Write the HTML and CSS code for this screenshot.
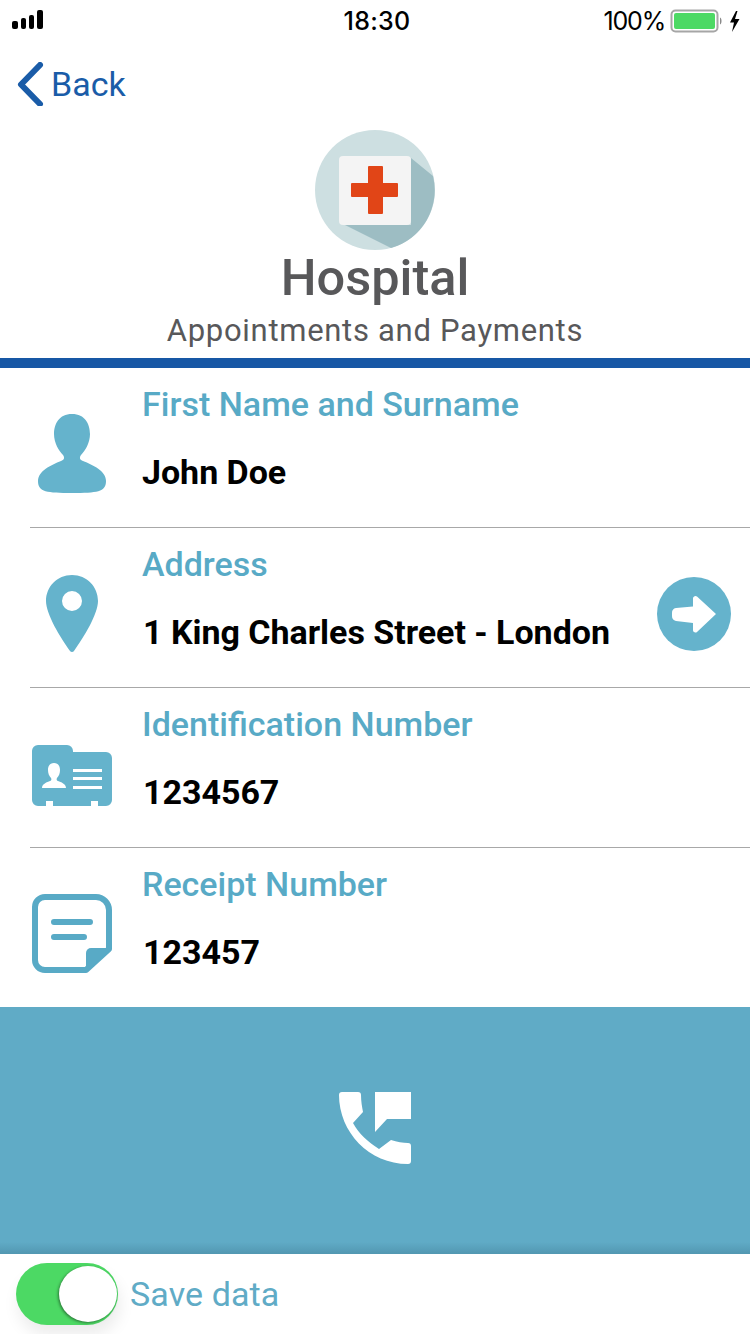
FILE: index.html
```html
<!DOCTYPE html>
<html lang="en">
<head>
<meta charset="utf-8">
<title>Hospital</title>
<link rel="stylesheet" href="styles.css">
</head>
<body>
<div class="page">
  <header class="status">
    <svg class="signal" width="34" height="20" viewBox="0 0 34 20"><g fill="#000"><rect x="0" y="11" width="6" height="8" rx="2"/><rect x="9" y="8" width="5" height="11" rx="2"/><rect x="17" y="5" width="5" height="14" rx="2"/><rect x="25" y="0" width="6" height="19" rx="2"/></g></svg>
    <span class="time">18:30</span>
    <div class="status-right">
      <span class="pct">100%</span>
      <svg width="72" height="24" viewBox="0 0 72 24"><rect x="1.500" y="1.500" width="46" height="21" rx="4" fill="#fff" stroke="#a6a6a6" stroke-width="2"/><rect x="4" y="4" width="41" height="16" rx="2" fill="#4cd964"/><path d="M50 8.500c2 .5 2 6.500 0 7z" fill="#8a8a8a"/><path d="M66 2l-6 11.500h4l-2 9.500 7.500-13h-4.500l2.500-8z" fill="#000"/></svg>
    </div>
  </header>
  <nav class="nav">
    <svg width="28" height="44" viewBox="0 0 28 44"><path d="M23 3 4 22.500 23 42" fill="none" stroke="#1a5ca8" stroke-width="6" stroke-linecap="round" stroke-linejoin="round"/></svg>
    <span class="back">Back</span>
  </nav>
  <section class="brand">
    <svg class="logo" width="120" height="120" viewBox="0 0 120 120">
      <circle cx="60" cy="60" r="60" fill="#cddfe1"/>
      <path d="M96 28 118 46A60 60 0 0 1 76 118L30 95H96z" fill="#9dbdc3"/>
      <rect x="24" y="26" width="72" height="69" rx="4" fill="#f4f4f4"/>
      <path d="M54 36h13a1 1 0 0 1 1 1V53h14a1 1 0 0 1 1 1v12a1 1 0 0 1-1 1H68v16a1 1 0 0 1-1 1H54a1 1 0 0 1-1-1V67H37a1 1 0 0 1-1-1V54a1 1 0 0 1 1-1H53V37a1 1 0 0 1 1-1z" fill="#e14517"/>
    </svg>
    <h1 class="title">Hospital</h1>
    <p class="subtitle">Appointments and Payments</p>
  </section>
  <main class="rows">
    <div class="row">
      <svg class="ico" width="143" height="159" viewBox="0 0 143 159"><path d="M72 46C59 46 54 56 54 66c0 9 5 17 9 21 2 3 1 5-2 6-10 4-23 10-23 20 0 11 9 12 34 12s34-1 34-12c0-10-13-16-23-20-3-1-4-3-2-6 4-4 9-12 9-21 0-10-5-20-18-20z" fill="#65b3cc"/></svg>
      <div class="text"><div class="label">First Name and Surname</div><div class="value value-tight">John Doe</div></div>
    </div>
    <div class="row">
      <svg class="ico" width="143" height="159" viewBox="0 0 143 159"><path fill-rule="evenodd" d="M72 47c15 0 26 12 26 26 0 13-14 36-24 50a2.500 2.500 0 0 1-4 0C60 109 46 86 46 73c0-14 11-26 26-26zm0 16a10 10 0 1 0 0 20 10 10 0 0 0 0-20z" fill="#65b3cc"/></svg>
      <div class="text"><div class="label">Address</div><div class="value">1 King Charles Street - London</div></div>
      <svg class="go" width="74" height="74" viewBox="0 0 74 74"><circle cx="37" cy="37" r="37" fill="#65b3cc"/><path d="M19 31 36 29.500V21a2.500 2.500 0 0 1 4-1.500L59 37 40 55a2.500 2.500 0 0 1-4-1.500V46L19 44a5 5 0 0 1-4-5v-3a5 5 0 0 1 4-5z" fill="#fff"/></svg>
    </div>
    <div class="row">
      <svg class="ico" width="143" height="159" viewBox="0 0 143 159"><path d="M38 57h29a6 6 0 0 1 6 6v1h33a6 6 0 0 1 6 6v42a6 6 0 0 1-6 6h-8v-5H91v5H53v-5H46v5h-8a6 6 0 0 1-6-6V63a6 6 0 0 1 6-6z" fill="#65b3cc"/><path d="M54 75c-5 0-6 4-6 7 0 3 1 6 3 8 1 1 0 3-1 3-3 1-8 3-8 7h24c0-4-5-6-8-7-1 0-2-2-1-3 2-2 3-5 3-8 0-3-1-7-6-7z" fill="#fff"/><path d="M73 81h29v3H73zM73 89h29v3H73zM73 98h29v3H73z" fill="#fff"/></svg>
      <div class="text"><div class="label">Identification Number</div><div class="value">1234567</div></div>
    </div>
    <div class="row row-last">
      <svg class="ico" width="143" height="159" viewBox="0 0 143 159"><path d="M45 49h51a13 13 0 0 1 13 13v39L86 122H45a10 10 0 0 1-10-10V59a10 10 0 0 1 10-10z" fill="#fff" stroke="#58aac6" stroke-width="6" stroke-linejoin="round"/><path d="M86 124v-19a5 5 0 0 1 5-5h21z" fill="#58aac6"/><path d="M54 74h36M54 89h30" stroke="#58aac6" stroke-width="6" stroke-linecap="round" fill="none"/></svg>
      <div class="text"><div class="label">Receipt Number</div><div class="value">123457</div></div>
    </div>
  </main>
  <section class="call">
    <svg width="72" height="72" viewBox="0 0 72 72"><path d="M3 0H19a3 3 0 0 1 3 3c0 6 1 12 2 17L14 31C20 42 29 50 40 57L52 48C58 50 64 51 69 51a3 3 0 0 1 3 3V69a3 3 0 0 1-3 3C30 72 0 40 0 3a3 3 0 0 1 3-3z" fill="#fff"/><path d="M36 0h36v27H48L36 40z" fill="#fff"/></svg>
  </section>
  <footer class="save">
    <div class="toggle"><span class="knob"></span></div>
    <span class="save-label">Save data</span>
  </footer>
</div>
</body>
</html>
```
FILE: styles.css
```css
* { box-sizing: border-box; }
html, body { margin: 0; padding: 0; background: #fff; }
.page {
  width: 750px;
  height: 1334px;
  overflow: hidden;
  display: flex;
  flex-direction: column;
  font-family: Roboto, "Liberation Sans", sans-serif;
}
.status {
  height: 40px;
  flex: none;
  display: grid;
  grid-template-columns: 1fr auto 1fr;
  align-items: center;
  padding: 2px 8px 0 12px;
}
.signal { margin-top: -2px; }
.time { font: 500 25px Inter, Roboto, sans-serif; letter-spacing: 0.3px; }
.status-right { display: flex; align-items: center; justify-content: flex-end; gap: 5px; }
.pct { font: 400 25px Inter, Roboto, sans-serif; letter-spacing: -1.2px; }
.nav {
  height: 88px;
  flex: none;
  display: flex;
  align-items: center;
  gap: 6px;
  padding: 0 0 0 17px;
}
.back { font-size: 34px; color: #1a5ca8; }
.brand {
  height: 240px;
  flex: none;
  padding-top: 2px;
  display: flex;
  flex-direction: column;
  align-items: center;
  border-bottom: 10px solid #1757a5;
}
.logo { flex: none; }
.title {
  margin: 0;
  font-size: 50.500px;
  line-height: 56px;
  font-weight: 500;
  color: #58585a;
}
.subtitle {
  margin: 5px 0 0;
  font-size: 31px;
  line-height: 40px;
  letter-spacing: 0.7px;
  color: #58585a;
}
.rows { flex: none; display: flex; flex-direction: column; }
.row {
  height: 160px;
  margin-left: 30px;
  border-bottom: 1px solid #a8a8a8;
  display: flex;
  position: relative;
}
.row-last { height: 159px; border-bottom: 0; }
.ico { flex: none; margin-left: -30px; }
.text { flex: 1; padding-top: 14px; }
.label { margin-left: -1px; font-size: 34px; line-height: 44px; font-weight: 500; color: #58aac6; }
.value { margin-top: 24px; font-size: 34px; line-height: 44px; font-weight: 700; letter-spacing: -0.03px; color: #000; }
.value-tight { margin-left: -1px; }
.go { position: absolute; right: 19px; top: 49px; }
.call {
  height: 247px;
  flex: none;
  display: flex;
  align-items: center;
  justify-content: center;
  padding-bottom: 5px;
  background: linear-gradient(to bottom, #60abc6 0, #60abc6 235px, #5297b1 100%);
}
.save {
  flex: 1;
  display: flex;
  align-items: center;
  gap: 12px;
  padding-left: 16px;
}
.toggle {
  position: relative;
  width: 102px;
  height: 62px;
  border-radius: 31px;
  background: #4cd964;
  box-shadow: 2px 10px 16px rgba(0, 0, 0, 0.08);
}
.knob {
  position: absolute;
  top: 3px;
  right: 1px;
  width: 58px;
  height: 56px;
  border-radius: 50%;
  background: #fff;
  box-shadow: -1px 1px 3px rgba(0, 0, 0, 0.45);
}
.save-label { font-size: 34px; color: #60abc6; letter-spacing: 0.1px; }
```
